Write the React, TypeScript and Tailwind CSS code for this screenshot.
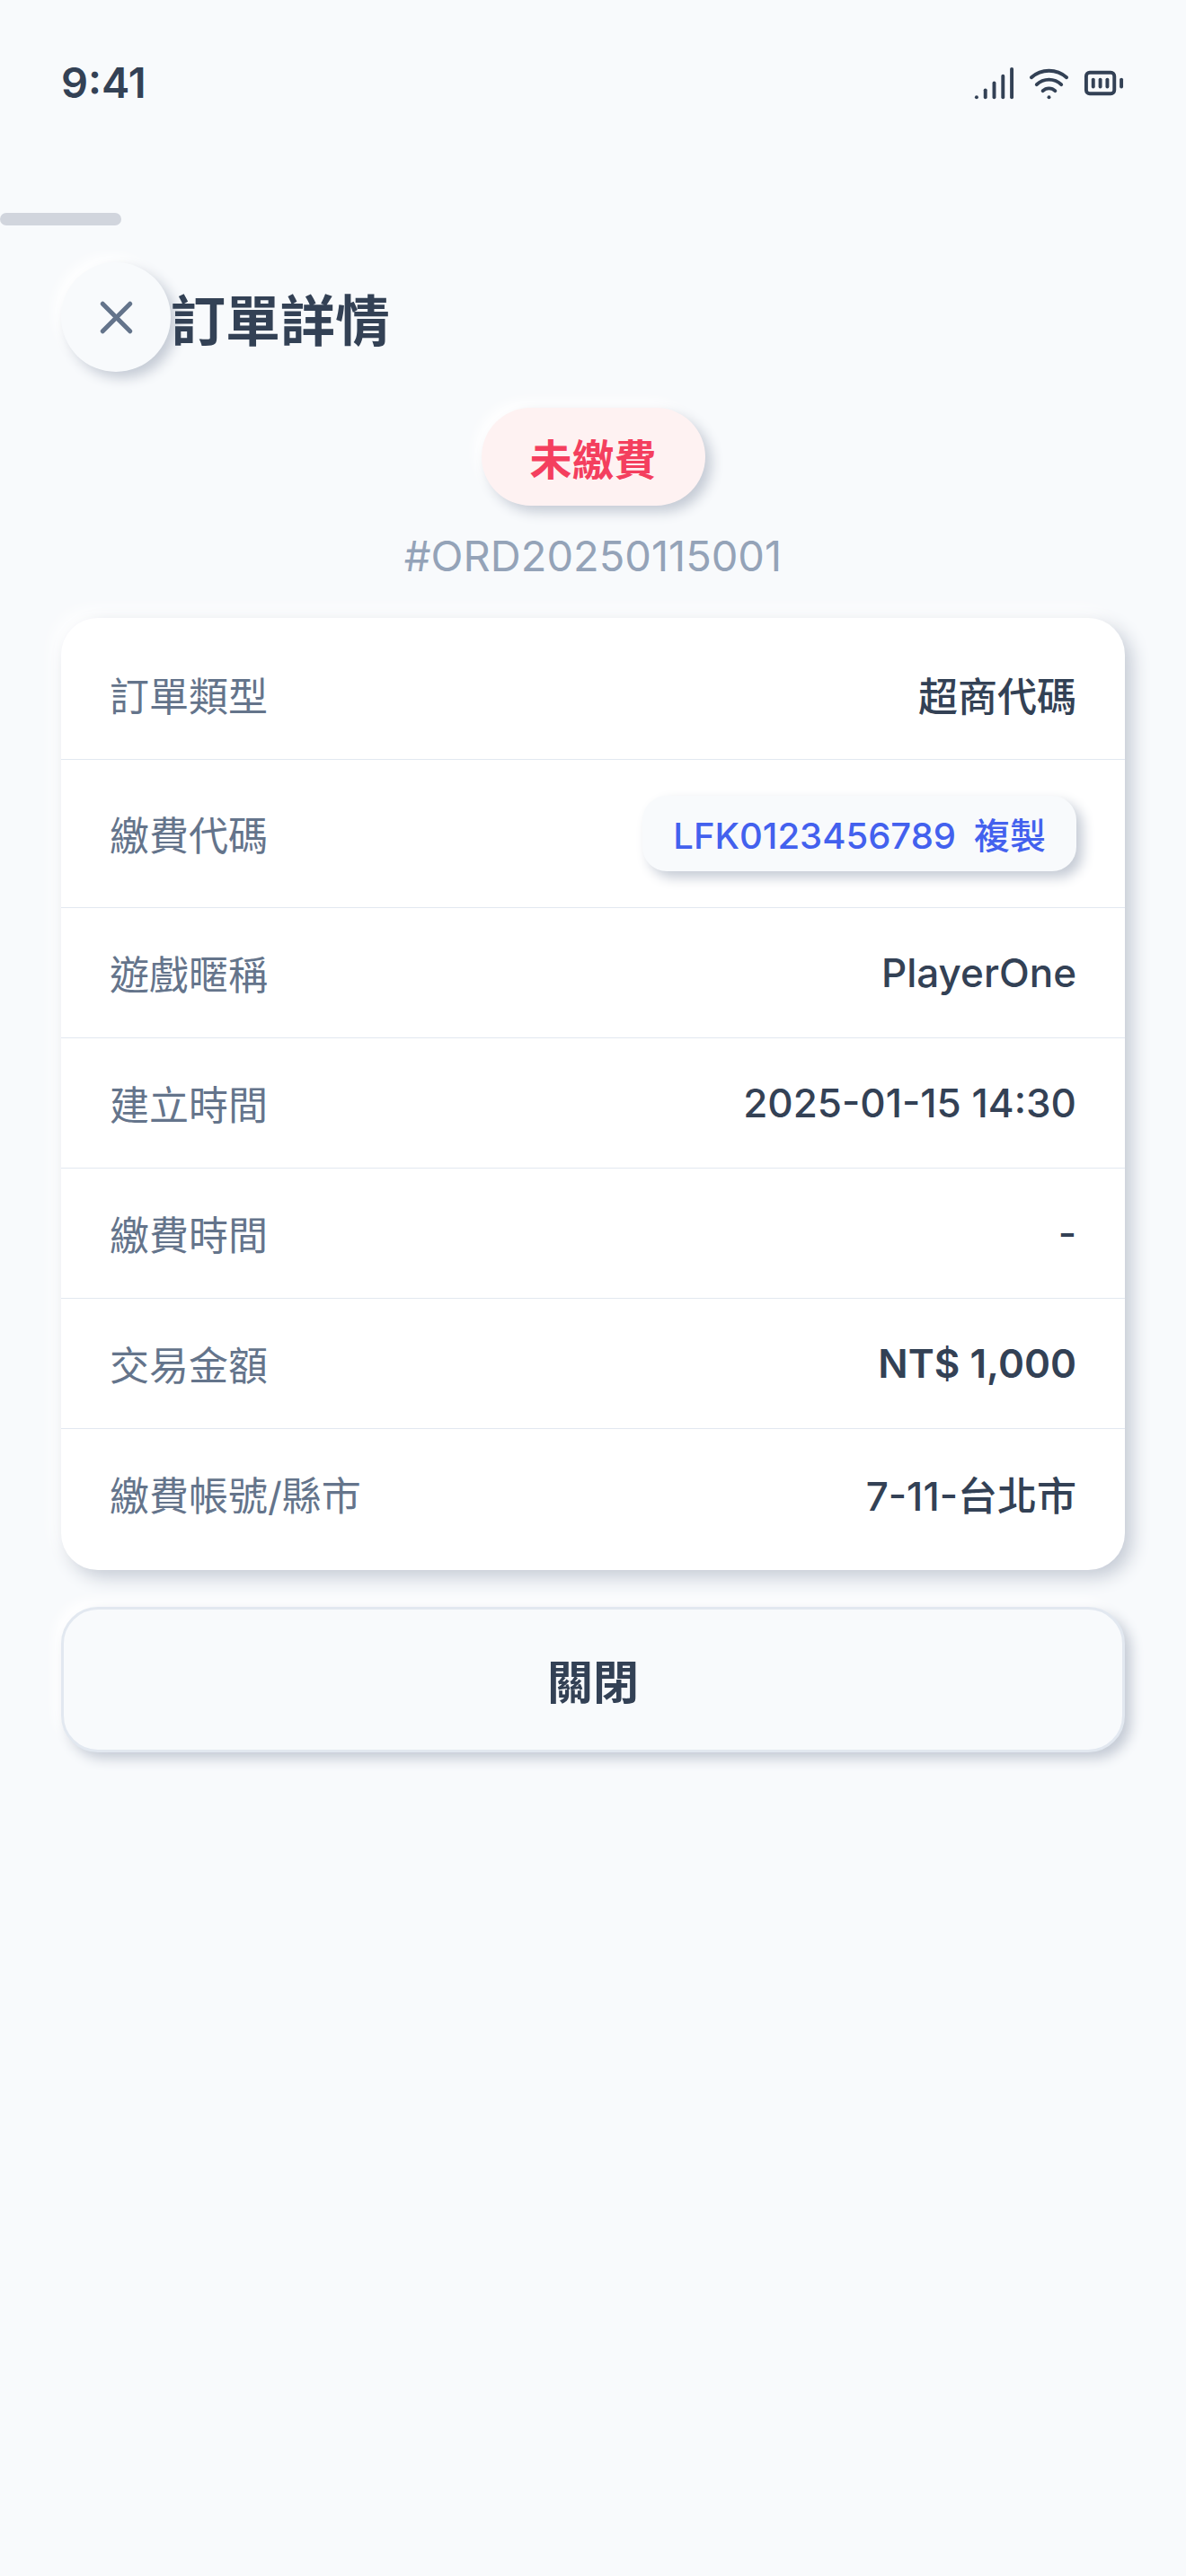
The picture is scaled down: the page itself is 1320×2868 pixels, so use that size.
import { useState, type ReactNode } from "react";
import { BatteryFull, Signal, Wifi, X } from "lucide-react";

interface Order {
  id: string;
  status: string;
  type: string;
  code: string;
  nickname: string;
  createdAt: string;
  paidAt: string | null;
  amount: number;
  account: string;
}

const order: Order = {
  id: "ORD20250115001",
  status: "未繳費",
  type: "超商代碼",
  code: "LFK0123456789",
  nickname: "PlayerOne",
  createdAt: "2025-01-15 14:30",
  paidAt: null,
  amount: 1000,
  account: "7-11-台北市",
};

const StatusBar = () => (
  <div className="flex items-center justify-between px-[68px] pt-[60px] h-[124px]">
    <span className="text-[47px] leading-normal font-semibold">9:41</span>
    <div className="flex items-center gap-[14px]">
      <Signal size={47} />
      <Wifi size={47} />
      <BatteryFull size={47} />
    </div>
  </div>
);

interface RowProps {
  label: string;
  bold?: boolean;
  children: ReactNode;
}

const Row = ({ label, bold, children }: RowProps) => (
  <div className="flex items-center justify-between px-[54px] py-10 border-b border-[#e2e8f0] last:border-b-0 text-[44px] leading-[normal]">
    <dt className="text-[#64748b]">{label}</dt>
    <dd className={bold ? "font-semibold" : "font-medium"}>{children}</dd>
  </div>
);

const CopyButton = ({ code }: { code: string }) => {
  const [copied, setCopied] = useState(false);

  const handleCopy = () => {
    navigator.clipboard?.writeText(code);
    setCopied(true);
  };

  return (
    <button
      type="button"
      onClick={handleCopy}
      className="flex items-baseline gap-5 px-[34px] py-[13px] rounded-[27px] bg-[#f8fafc] text-[40px] leading-[normal] font-medium text-[#4361ee] shadow-[7px_7px_14px_#c5cbd5,-7px_-7px_14px_#ffffff]"
    >
      <span>{code}</span>
      <span>{copied ? "已複製" : "複製"}</span>
    </button>
  );
};

const App = () => {
  return (
    <div
      lang="zh-Hant"
      className="min-h-screen bg-[#f8fafc] text-[#334155] font-['Inter','Noto_Sans_CJK_TC',sans-serif]"
    >
      <StatusBar />

      <div className="mt-[113px] h-[14px] w-[135px] rounded-full bg-[#d1d5dd]" />

      <main className="px-[68px] pt-[41px] pb-[68px]">
        <header className="flex items-center">
          <button
            type="button"
            aria-label="關閉"
            className="flex size-[122px] items-center justify-center rounded-full bg-[#f8fafc] text-[#64748b] shadow-[7px_7px_14px_#c5cbd5,-7px_-7px_14px_#ffffff]"
          >
            <X size={61} />
          </button>
          <h1 className="text-[61px] leading-[normal] font-bold">訂單詳情</h1>
        </header>

        <div className="mt-10 flex flex-col items-center">
          <span className="rounded-full bg-[#fef2f2] px-[54px] py-[20px] text-[47px] leading-[normal] font-bold text-[#f43f5e] shadow-[7px_7px_14px_#c5cbd5,-7px_-7px_14px_#ffffff]">
            {order.status}
          </span>
          <span className="mt-[20px] text-[47px] leading-[71px] text-[#94a3b8]">
            #{order.id}
          </span>
        </div>

        <dl className="mt-[34px] rounded-[41px] bg-white py-[13px] shadow-[8px_8px_20px_#c5cbd5,-8px_-8px_20px_#ffffff]">
          <Row label="訂單類型">{order.type}</Row>
          <Row label="繳費代碼">
            <CopyButton code={order.code} />
          </Row>
          <Row label="遊戲暱稱">{order.nickname}</Row>
          <Row label="建立時間">{order.createdAt}</Row>
          <Row label="繳費時間">{order.paidAt ?? "-"}</Row>
          <Row label="交易金額" bold>
            NT$ {order.amount.toLocaleString("en-US")}
          </Row>
          <Row label="繳費帳號/縣市">{order.account}</Row>
        </dl>

        <button
          type="button"
          className="mt-[41px] w-full rounded-[41px] border-3 border-[#e2e8f0] bg-[#f8fafc] py-[41px] text-[51px] leading-[normal] font-semibold shadow-[7px_7px_14px_#c5cbd5,-7px_-7px_14px_#ffffff]"
        >
          關閉
        </button>
      </main>
    </div>
  );
};

export default App;
